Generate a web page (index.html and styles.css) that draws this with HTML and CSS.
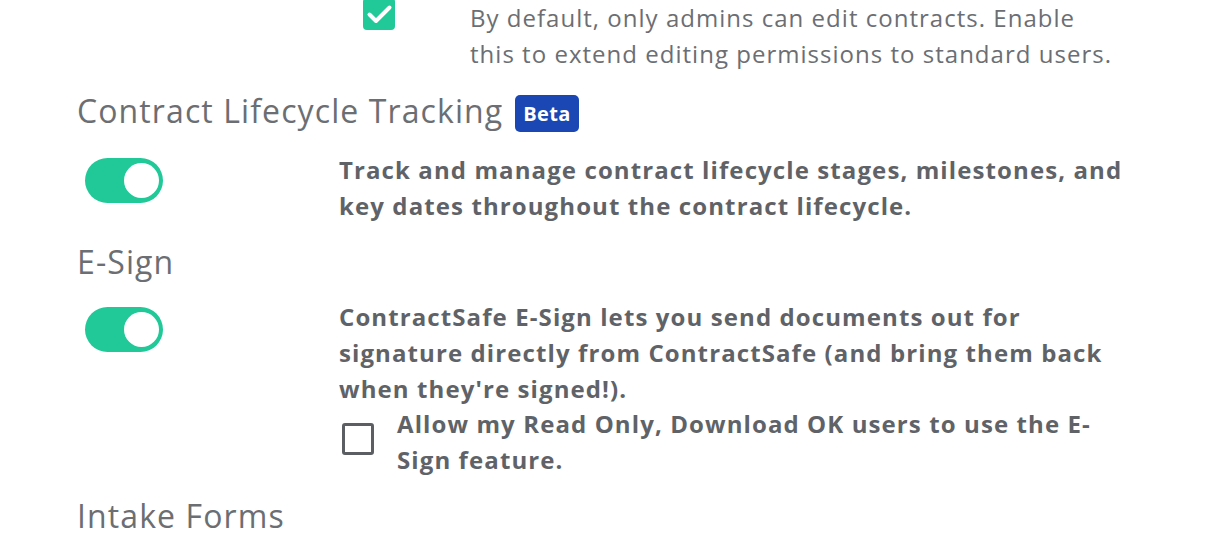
FILE: index.html
```html
<!DOCTYPE html>
<html lang="en">
<head>
<meta charset="utf-8">
<title>Settings</title>
<link rel="stylesheet" href="styles.css">
</head>
<body>
<div class="page">
  <div class="top-row">
    <div class="sub-option">
      <span class="checkbox checked">
        <svg viewBox="0 0 32 32" width="32" height="32"><path d="M6.5 16.5 L13 23 L26.5 9.5" fill="none" stroke="#fff" stroke-width="4" stroke-linecap="round" stroke-linejoin="round"/></svg>
      </span>
      <p class="sub-text">By default, only admins can edit contracts. Enable this to extend editing permissions to standard users.</p>
    </div>
  </div>

  <section class="feature first">
    <h2 class="feature-title">Contract Lifecycle Tracking <span class="badge">Beta</span></h2>
    <div class="feature-row">
      <div class="toggle-col"><span class="toggle on"><span class="knob"></span></span></div>
      <div class="desc">
        <p>Track and manage contract lifecycle stages, milestones, and key dates throughout the contract lifecycle.</p>
      </div>
    </div>
  </section>

  <section class="feature second-feature">
    <h2 class="feature-title">E-Sign</h2>
    <div class="feature-row second">
      <div class="toggle-col"><span class="toggle on"><span class="knob"></span></span></div>
      <div class="desc">
        <p>ContractSafe E-Sign lets you send documents out for signature directly from ContractSafe (and bring them back when they're signed!).</p>
        <label class="check-row">
          <span class="checkbox empty"></span>
          <span class="check-label">Allow my Read Only, Download OK users to use the E-Sign feature.</span>
        </label>
      </div>
    </div>
  </section>

  <section class="feature last">
    <h2 class="feature-title">Intake Forms</h2>
  </section>
</div>
</body>
</html>
```

FILE: styles.css
```css
html, body {
  margin: 0;
  padding: 0;
  background: #ffffff;
}

body {
  font-family: "Open Sans", "Liberation Sans", sans-serif;
  color: #5f6368;
  overflow: hidden;
}

.page {
  padding-left: 77px;
  width: 1139px;
}

p {
  margin: 0;
}

/* top sub option */
.top-row {
  padding-left: 262px;
}

.sub-option {
  display: flex;
  align-items: flex-start;
  margin-left: 24px;
}

.sub-text {
  margin-left: 75px;
  width: 652px;
  font-size: 24px;
  line-height: 36px;
  font-weight: 400;
  letter-spacing: 1.02px;
  color: #6b6e73;
}

.checkbox {
  flex: none;
  display: block;
  width: 32px;
  height: 32px;
  box-sizing: border-box;
  border-radius: 4px;
}

.checkbox.checked {
  background: #20c997;
  margin-top: -2px;
}

.checkbox svg {
  display: block;
}

.checkbox.empty {
  border: 3px solid #5b5e62;
  border-radius: 3px;
}

/* features */
.feature-title {
  display: flex;
  align-items: center;
  gap: 12px;
  margin: 12px 0 0;
  font-size: 32px;
  line-height: 48px;
  font-weight: 400;
  letter-spacing: 1.1px;
  color: #6b6e73;
}

.feature.first .feature-title {
  margin-top: 15px;
}

.feature.second-feature .feature-title,
.feature.last .feature-title {
  margin-top: 14px;
}

.badge {
  display: inline-block;
  margin-top: 5px;
  height: 37px;
  line-height: 37px;
  padding: 0 8px;
  border-radius: 5px;
  background: #1a47b4;
  color: #ffffff;
  font-size: 20px;
  font-weight: 700;
  letter-spacing: 0.3px;
}

.feature-row {
  display: grid;
  grid-template-columns: 262px 795px;
  margin-top: 17px;
}

.feature-row.second {
  margin-top: 13px;
}

.toggle-col {
  padding-left: 8px;
  padding-top: 6px;
}

.feature-row.second .toggle-col {
  padding-top: 8px;
}

.toggle {
  position: relative;
  display: block;
  width: 78px;
  height: 45px;
  border-radius: 23px;
  background: #20c997;
}

.knob {
  position: absolute;
  top: 5px;
  right: 4px;
  width: 35px;
  height: 35px;
  border-radius: 50%;
  background: #ffffff;
}

.desc {
  font-size: 24px;
  line-height: 36px;
  font-weight: 700;
  letter-spacing: 1.1px;
  color: #5f6368;
}

.check-row {
  display: flex;
  align-items: center;
  padding-left: 3px;
  margin-top: -1px;
}

.check-row .checkbox {
  margin-top: -6px;
}

.check-label {
  margin-left: 23px;
  width: 737px;
}
```
